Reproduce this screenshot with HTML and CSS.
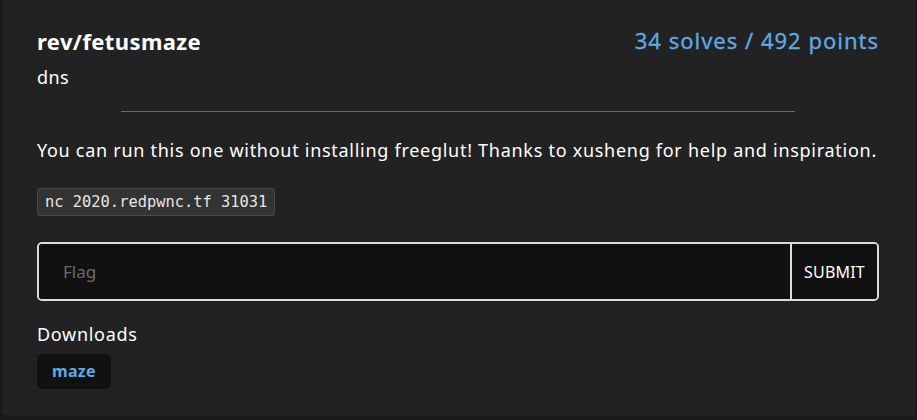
FILE: index.html
```html
<!DOCTYPE html>
<html>
<head>
<meta charset="utf-8">
<link rel="stylesheet" href="styles.css">
</head>
<body>
<div class="page">
  <div class="card">
    <div class="head">
      <div class="title-col">
        <h1 class="title">rev/fetusmaze</h1>
        <div class="author">dns</div>
      </div>
      <div class="score">34 solves / 492 points</div>
    </div>
    <hr class="sep">
    <p class="desc">You can run this one without installing freeglut! Thanks to xusheng for help and inspiration.</p>
    <div class="code-row"><code class="code">nc 2020.redpwnc.tf 31031</code></div>
    <form class="flag-form">
      <input class="flag-input" type="text" placeholder="Flag">
      <button class="submit" type="button">SUBMIT</button>
    </form>
    <div class="dl-title">Downloads</div>
    <div class="dl-row"><a class="dl" href="#">maze</a></div>
  </div>
</div>
</body>
</html>
```
FILE: styles.css
```css
html, body {
  margin: 0;
  padding: 0;
  background: #1b1b1b;
}
body {
  font-family: "Noto Sans", "Open Sans", sans-serif;
  color: #fff;
  width: 917px;
  height: 420px;
  overflow: hidden;
}
.page {
  padding: 0 2px 4px 2px;
}
.card {
  background: #222222;
  border-radius: 0 0 6px 6px;
  padding: 26px 36px 28px 35px;
  height: 362px;
}
.head {
  display: flex;
  justify-content: space-between;
  align-items: flex-start;
}
.title {
  margin: 0;
  font-size: 22px;
  font-weight: 700;
  line-height: 30px;
  letter-spacing: 0.4px;
}
.author {
  margin-top: 9px;
  font-size: 18px;
  line-height: 24px;
  letter-spacing: 0.4px;
}
.score {
  font-size: 22px;
  line-height: 30px;
  color: #5ea9e6;
  letter-spacing: 1px;
  margin-top: -1px;
  -webkit-text-stroke: 0.3px #5ea9e6;
}
.sep {
  width: 80%;
  margin: 22px auto 0 auto;
  border: 0;
  border-top: 1px solid #6a6a6a;
  height: 0;
}
.desc {
  margin: 25px 0 0 0;
  font-size: 18px;
  line-height: 26px;
  letter-spacing: 0.72px;
  white-space: nowrap;
}
.code-row {
  margin-top: 25px;
  display: flex;
}
.code {
  font-family: "DejaVu Sans Mono", monospace;
  font-size: 15.4px;
  background: #333;
  border: 1px solid #484848;
  border-radius: 3px;
  padding: 0 7px;
  height: 28px;
  box-sizing: border-box;
  line-height: 26px;
  color: #e6e6e6;
}
.flag-form {
  margin-top: 26px;
  display: flex;
  height: 59px;
  box-sizing: border-box;
  border: 2px solid #dcdcdc;
  border-radius: 5px;
  background: #111;
  overflow: hidden;
}
.flag-input {
  flex: 1;
  min-width: 0;
  background: #111;
  border: 0;
  border-right: 2px solid #dcdcdc;
  padding: 0 24px;
  font-family: "Noto Sans", sans-serif;
  font-size: 17px;
  color: #fff;
  outline: none;
}
.flag-input::placeholder {
  color: #6b6b6b;
}
.submit {
  background: #111;
  border: 0;
  color: #fff;
  font-family: "Noto Sans", sans-serif;
  font-size: 16px;
  letter-spacing: 0.2px;
  padding: 0;
  width: 85px;
}
.dl-title {
  margin-top: 21px;
  font-size: 18px;
  line-height: 24px;
  letter-spacing: 0.7px;
}
.dl-row {
  display: flex;
  margin-top: 8px;
}
.dl {
  background: #111;
  border-radius: 5px;
  color: #5ea9e6;
  font-weight: 700;
  font-size: 16px;
  letter-spacing: 0.3px;
  text-decoration: none;
  padding: 0 15px;
  line-height: 35px;
  height: 35px;
}
```
